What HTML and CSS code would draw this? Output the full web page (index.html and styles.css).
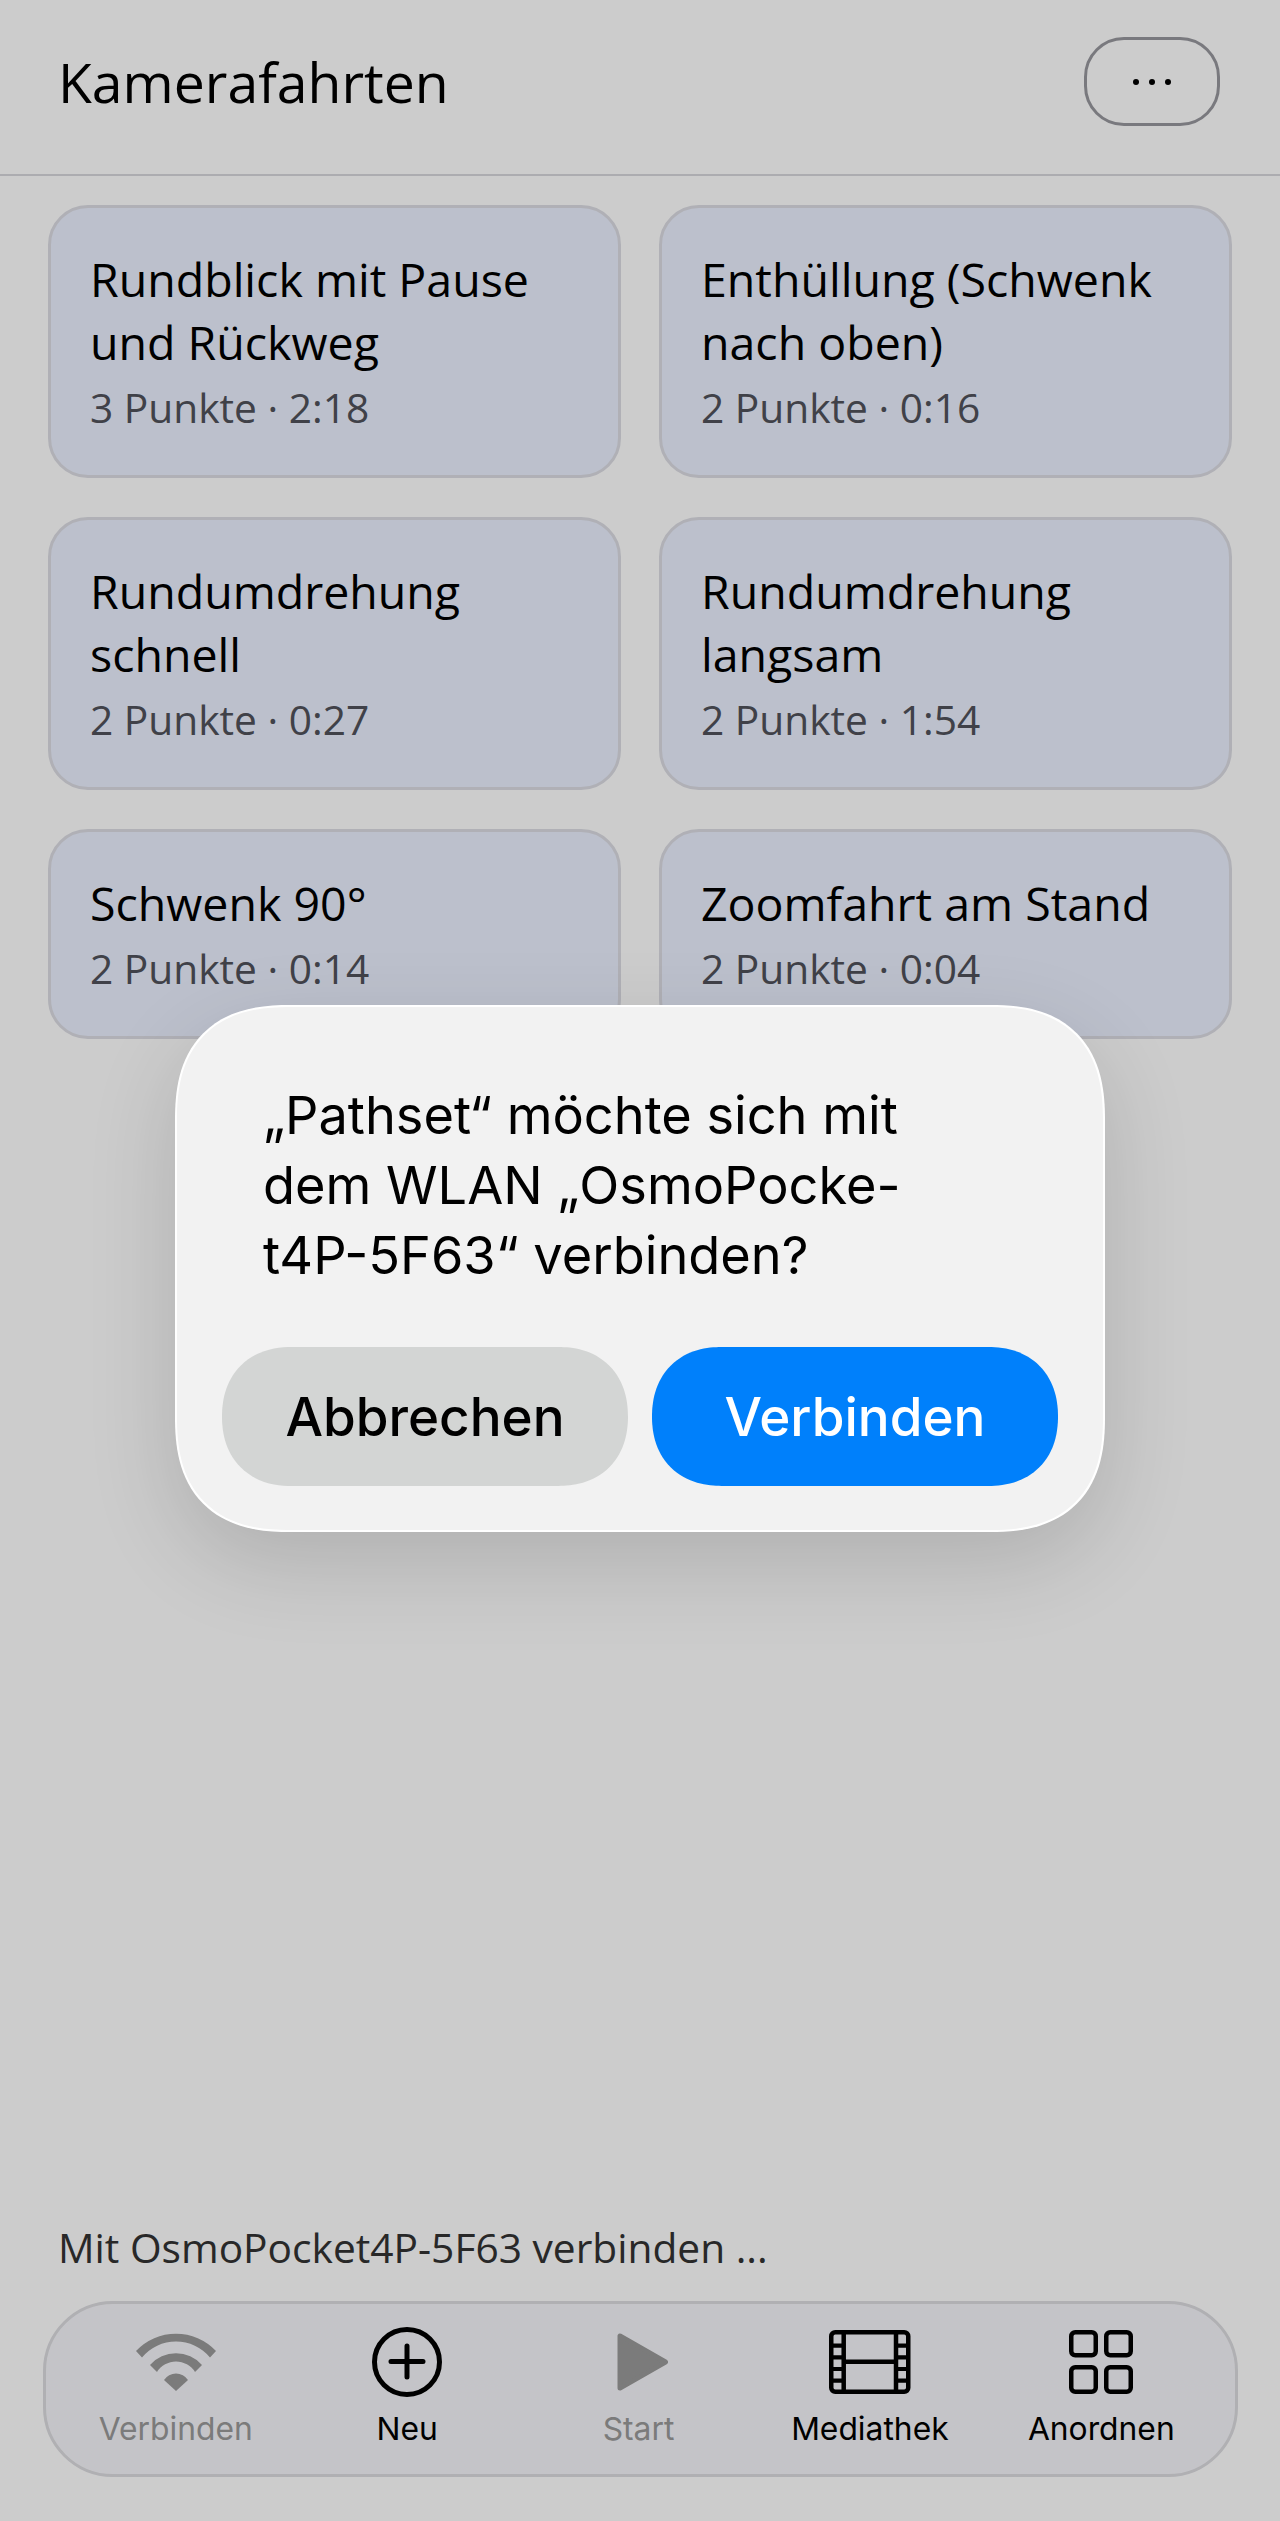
FILE: index.html
```html
<!DOCTYPE html>
<html lang="de">
<head>
    <meta charset="UTF-8">
    <meta name="viewport" content="width=device-width, initial-scale=1.0">
    <title>Kamerafahrten</title>
    <link rel="stylesheet" href="styles.css">
</head>
<body>
    <div class="page">
        <header class="topbar">
            <h1>Kamerafahrten</h1>
            <button class="more-btn">
                <span class="dot"></span><span class="dot"></span><span class="dot"></span>
            </button>
        </header>

        <div class="path-grid">
            <div class="path-card">
                <div class="path-name">Rundblick mit Pause und Rückweg</div>
                <div class="path-meta">3 Punkte · 2:18</div>
            </div>
            <div class="path-card">
                <div class="path-name">Enthüllung (Schwenk nach oben)</div>
                <div class="path-meta">2 Punkte · 0:16</div>
            </div>
            <div class="path-card">
                <div class="path-name">Rundumdrehung schnell</div>
                <div class="path-meta">2 Punkte · 0:27</div>
            </div>
            <div class="path-card">
                <div class="path-name">Rundumdrehung langsam</div>
                <div class="path-meta">2 Punkte · 1:54</div>
            </div>
            <div class="path-card">
                <div class="path-name">Schwenk 90°</div>
                <div class="path-meta">2 Punkte · 0:14</div>
            </div>
            <div class="path-card">
                <div class="path-name">Zoomfahrt am Stand</div>
                <div class="path-meta">2 Punkte · 0:04</div>
            </div>
        </div>

        <div class="status">Mit OsmoPocket4P-5F63 verbinden ...</div>

        <nav class="tabbar">
            <div class="tab disabled">
                <svg class="tab-icon" width="80" height="70" viewBox="0 0 80 70">
                    <path d="M0 24 A55 55 0 0 1 80 24 L74 30.5 A44 44 0 0 0 6 30.5 Z" fill="currentColor"/>
                    <path d="M14 38 A34.7 34.7 0 0 1 66 38 L59 45 A22.4 22.4 0 0 0 21 45 Z" fill="currentColor"/>
                    <path d="M28 53 A14.4 14.4 0 0 1 52 53 L40 64 Z" fill="currentColor"/>
                </svg>
                <span>Verbinden</span>
            </div>
            <div class="tab">
                <svg class="tab-icon" width="70" height="70" viewBox="0 0 70 70" fill="none" stroke="currentColor">
                    <circle cx="35" cy="35" r="32.5" stroke-width="5"/>
                    <path d="M19 34.5 H51 M35 19 V50" stroke-width="5" stroke-linecap="round"/>
                </svg>
                <span>Neu</span>
            </div>
            <div class="tab disabled">
                <svg class="tab-icon" width="60" height="70" viewBox="0 0 60 70">
                    <path d="M12 9 V61 L57.5 35 Z" fill="currentColor" stroke="currentColor" stroke-width="5" stroke-linejoin="round"/>
                </svg>
                <span>Start</span>
            </div>
            <div class="tab">
                <svg class="tab-icon" width="82" height="70" viewBox="0 0 82 70" fill="none" stroke="currentColor" stroke-width="4.5">
                    <rect x="2.25" y="5.25" width="77" height="59.5" rx="4"/>
                    <path d="M14.7 4 V66 M67 4 V66 M15 34.7 H67"/>
                    <path d="M2 18.6 H14 M2 30.3 H14 M2 42 H14 M2 53.7 H14 M68 18.6 H80 M68 30.3 H80 M68 42 H80 M68 53.7 H80" stroke-width="4.2"/>
                </svg>
                <span>Mediathek</span>
            </div>
            <div class="tab">
                <svg class="tab-icon" width="66" height="70" viewBox="0 0 66 70" fill="none" stroke="currentColor" stroke-width="4.5">
                    <rect x="3.25" y="5.25" width="24.5" height="23" rx="4"/>
                    <rect x="38.25" y="5.25" width="24.5" height="23" rx="4"/>
                    <rect x="3.25" y="40.25" width="24.5" height="24.5" rx="4"/>
                    <rect x="38.25" y="40.25" width="24.5" height="24.5" rx="4"/>
                </svg>
                <span>Anordnen</span>
            </div>
        </nav>
    </div>

    <!-- System prompt on top of the dimmed page -->
    <div class="overlay">
        <div class="dialog">
            <p class="dialog-text">„Pathset“ möchte sich mit<br>dem WLAN „OsmoPocke-<br>t4P-5F63“ verbinden?</p>
            <div class="dialog-buttons">
                <button class="dialog-btn cancel">Abbrechen</button>
                <button class="dialog-btn confirm">Verbinden</button>
            </div>
        </div>
    </div>
</body>
</html>
```

FILE: styles.css
```css
* {
    box-sizing: border-box;
}
body {
    margin: 0;
    background: #fff;
    font-family: "Open Sans", sans-serif;
    color: #000;
}
.page {
    height: 2521px;
    display: flex;
    flex-direction: column;
    overflow: hidden;
}
.topbar {
    height: 176px;
    flex: none;
    display: flex;
    align-items: flex-start;
    justify-content: space-between;
    padding: 37px 60px 0 58px;
    border-bottom: 2px solid #d8d8dc;
}
.topbar h1 {
    margin: 0;
    font-size: 55.3px;
    font-weight: 400;
    line-height: 90px;
}
.more-btn {
    width: 136px;
    height: 89px;
    display: flex;
    align-items: center;
    justify-content: center;
    gap: 10px;
    background: transparent;
    border: 3px solid #98989e;
    border-radius: 40px;
    padding: 0;
}
.dot {
    width: 6px;
    height: 6px;
    border-radius: 50%;
    background: #000;
}
.path-grid {
    display: grid;
    grid-template-columns: 573px 573px;
    column-gap: 38px;
    row-gap: 39px;
    padding: 29px 48px 0;
}
.path-card {
    background: #ebf0ff;
    border: 3px solid #dcdde4;
    border-radius: 40px;
    padding: 40px 39px 38px;
}
.path-name {
    font-size: 46.5px;
    line-height: 63px;
}
.path-meta {
    margin-top: 3px;
    font-size: 40.7px;
    line-height: 60px;
    color: #50525a;
}
.status {
    margin-top: auto;
    padding: 0 58px;
    font-size: 40.7px;
    line-height: 60px;
    color: #333;
}
.tabbar {
    height: 176px;
    flex: none;
    margin: 24px 42px 44px 43px;
    display: grid;
    grid-template-columns: repeat(5, 1fr);
    padding: 23px 18px 0 14px;
    background: #f6f6fa;
    border: 3px solid #dcdce0;
    border-radius: 70px;
}
.tab {
    display: flex;
    flex-direction: column;
    align-items: center;
    font-family: Inter, sans-serif;
    font-size: 31.8px;
    line-height: 44px;
    color: #000;
}
.tab.disabled {
    color: #9a9a9a;
}
.tab-icon {
    display: block;
    margin-bottom: 10px;
}
.overlay {
    position: absolute;
    top: 0;
    left: 0;
    width: 1280px;
    height: 2521px;
    display: flex;
    justify-content: center;
    align-items: flex-start;
    padding-top: 1005px;
    background: rgba(0, 0, 0, 0.2);
}
.dialog {
    width: 930px;
    height: 527px;
    padding: 73px 45px 0;
    background: #f2f2f2;
    border: 2px solid #fff;
    border-radius: 115px;
    corner-shape: superellipse(1.3);
    box-shadow: 0 30px 90px rgba(0, 0, 0, 0.14);
}
.dialog-text {
    margin: 0 0 0 41px;
    font-family: Inter, sans-serif;
    font-size: 52.3px;
    line-height: 70px;
    color: #000;
}
.dialog-buttons {
    display: flex;
    gap: 24px;
    margin-top: 57px;
}
.dialog-btn {
    flex: 1;
    height: 139px;
    border: none;
    border-radius: 70px;
    corner-shape: superellipse(1.15);
    font-family: Inter, sans-serif;
    font-size: 53px;
    font-weight: 550;
}
.cancel {
    background: #d3d5d4;
    color: #000;
}
.confirm {
    background: #0080fb;
    color: #fff;
}
```
